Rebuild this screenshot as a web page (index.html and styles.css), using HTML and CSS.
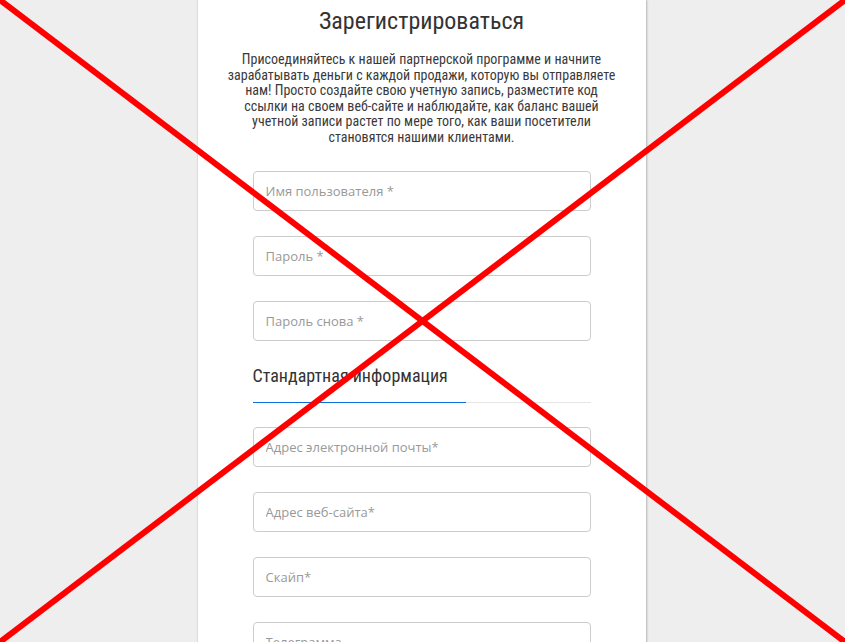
FILE: index.html
```html
<!DOCTYPE html>
<html lang="ru">
<head>
<meta charset="utf-8">
<link rel="stylesheet" href="styles.css">
</head>
<body>
<div class="page">
  <main class="card">
    <h1 class="title">Зарегистрироваться</h1>
    <p class="intro">Присоединяйтесь к нашей партнерской программе и начните зарабатывать деньги с каждой продажи, которую вы отправляете нам! Просто создайте свою учетную запись, разместите код ссылки на своем веб-сайте и наблюдайте, как баланс вашей учетной записи растет по мере того, как ваши посетители становятся нашими клиентами.</p>
    <form class="form">
      <div class="field"><input class="input" type="text" placeholder="Имя пользователя *"></div>
      <div class="field"><input class="input" type="password" placeholder="Пароль *"></div>
      <div class="field"><input class="input" type="password" placeholder="Пароль снова *"></div>
      <div class="section">
        <h2 class="section-title">Стандартная информация</h2>
        <div class="section-rule"><span class="section-accent"></span></div>
      </div>
      <div class="field"><input class="input" type="text" placeholder="Адрес электронной почты*"></div>
      <div class="field"><input class="input" type="text" placeholder="Адрес веб-сайта*"></div>
      <div class="field"><input class="input" type="text" placeholder="Скайп*"></div>
      <div class="field"><input class="input" type="text" placeholder="Телеграмма"></div>
    </form>
  </main>
</div>
<svg class="cross" viewBox="0 0 845 642" preserveAspectRatio="none">
  <line x1="0" y1="0" x2="845" y2="642" stroke="#ff0000" stroke-width="6"/>
  <line x1="845" y1="0" x2="0" y2="642" stroke="#ff0000" stroke-width="6"/>
</svg>
</body>
</html>
```
FILE: styles.css
```css
html, body {
  margin: 0;
  padding: 0;
}
body {
  background: #eeeeee;
  height: 642px;
  overflow: hidden;
  font-family: Roboto, "Liberation Sans", sans-serif;
}
.page {
  display: flex;
  justify-content: center;
}
.card {
  width: 448px;
  margin-left: -2px;
  background: #ffffff;
  box-shadow: 1px 0 2px rgba(0,0,0,0.25), -1px 0 1px rgba(0,0,0,0.06);
  min-height: 700px;
  box-sizing: border-box;
  padding: 0 55px;
}
.title {
  margin: 0;
  padding-top: 6px;
  text-align: center;
  font-weight: 400;
  font-size: 24px;
  line-height: 30px;
  color: #333333;
  font-stretch: 75%;
}
.intro {
  margin: 16px -28px 0;
  text-align: center;
  font-size: 14px;
  line-height: 15.5px;
  color: #3a3a3a;
  font-stretch: 75%;
}
.form {
  margin-top: 26px;
  display: flex;
  flex-direction: column;
}
.field {
  margin-bottom: 25px;
}
.input {
  display: block;
  width: 100%;
  box-sizing: border-box;
  height: 40px;
  border: 1px solid #cccccc;
  border-radius: 4px;
  padding: 0 12px;
  font-family: "Open Sans", sans-serif;
  font-size: 13px;
  color: #555;
  background: #fff;
  outline: none;
}
.input::placeholder {
  color: #999999;
}
.section {
  margin-bottom: 24px;
}
.section-title {
  margin: -1px 0 0;
  font-weight: 400;
  font-size: 18px;
  line-height: 22px;
  color: #333333;
  font-stretch: 75%;
  padding-bottom: 15px;
}
.section-rule {
  height: 1px;
  background: #e5e5e5;
  display: flex;
}
.section-accent {
  width: 213px;
  height: 1px;
  background: #0a6fd6;
}
.cross {
  position: fixed;
  left: 0;
  top: 0;
  width: 845px;
  height: 642px;
  pointer-events: none;
}
```
